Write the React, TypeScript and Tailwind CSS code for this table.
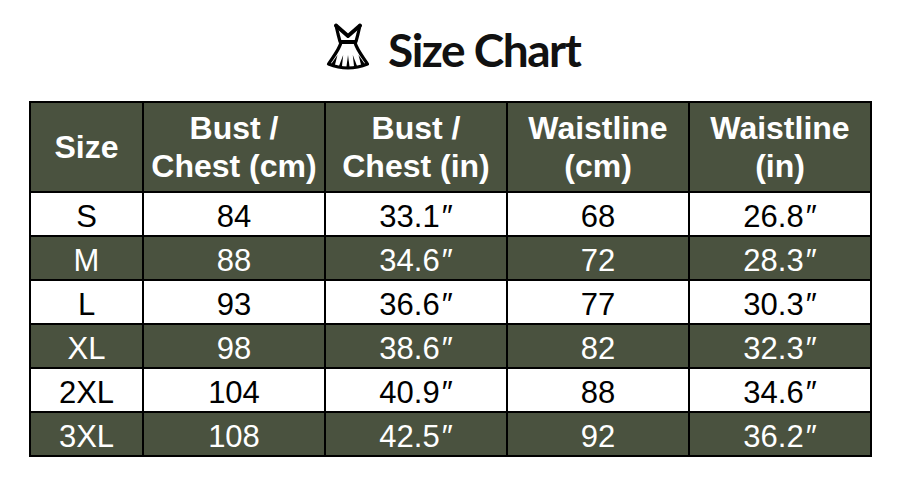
import React from 'react';

const rows = [
  ['S', '84', '33.1″', '68', '26.8″'],
  ['M', '88', '34.6″', '72', '28.3″'],
  ['L', '93', '36.6″', '77', '30.3″'],
  ['XL', '98', '38.6″', '82', '32.3″'],
  ['2XL', '104', '40.9″', '88', '34.6″'],
  ['3XL', '108', '42.5″', '92', '36.2″'],
];

const headers = [
  ['Size'],
  ['Bust /', 'Chest (cm)'],
  ['Bust /', 'Chest (in)'],
  ['Waistline', '(cm)'],
  ['Waistline', '(in)'],
];

function DressIcon() {
  return (
    <svg width="56" height="56" viewBox="0 0 56 56" fill="none">
      {/* bodice */}
      <path
        d="M16 2.5 L18 11 L20 18.5 L36 18.5 L38 11 L40 2.5"
        stroke="black"
        strokeWidth="3.2"
        strokeLinejoin="round"
        strokeLinecap="round"
      />
      {/* neckline */}
      <path d="M16 2.5 L28 13 L40 2.5" stroke="black" strokeWidth="3.8" strokeLinejoin="round" strokeLinecap="round" />
      {/* skirt */}
      <path
        d="M21 19.5 C19 27 13 34 8.5 41 Q28 49 47.5 41 C43 34 37 27 35 19.5 Z"
        fill="white"
        stroke="black"
        strokeWidth="3.2"
        strokeLinejoin="round"
      />
      {/* pleats */}
      <path d="M10.5 42 L14.5 43.5 L17.5 32 Z" fill="black" />
      <path d="M18.5 44.2 L21.8 44.8 L23.2 32 Z" fill="black" />
      <path d="M26.3 45 L29.7 45 L28 32 Z" fill="black" />
      <path d="M34.2 44.8 L37.5 44.2 L32.8 32 Z" fill="black" />
      <path d="M41.5 43.5 L45.5 42 L38.5 32 Z" fill="black" />
    </svg>
  );
}

function Cell({ value }: { value: string }) {
  if (!value.endsWith('″')) return <>{value}</>;
  return (
    <>
      {value.slice(0, -1)}
      <span className="ml-[2px]">″</span>
    </>
  );
}

export default function App() {
  return (
    <div className="w-[901px] h-[482px] bg-white" style={{ fontFamily: '"Liberation Sans", Arial, sans-serif' }}>
      <div className="h-[101px] flex items-center pl-[320px]">
        <DressIcon />
        <h1
          className="ml-[12px] text-[46px] font-bold text-[#111] tracking-[-1.5px] pb-[2px]"
          style={{ fontFamily: 'Lato, "Open Sans", sans-serif' }}
        >
          Size Chart
        </h1>
      </div>
      <table className="ml-[29px] w-[841px] table-fixed border-collapse border-2 border-black">
        <colgroup>
          <col className="w-[113px]" />
          <col className="w-[182px]" />
          <col className="w-[182px]" />
          <col className="w-[182px]" />
          <col className="w-[182px]" />
        </colgroup>
        <thead>
          <tr className="h-[90px] bg-[#4a523f]">
            {headers.map((h, i) => (
              <th
                key={i}
                className="border-2 border-black text-white font-bold text-[32px] leading-[38px] text-center align-middle p-0 whitespace-nowrap"
              >
                {h.map((line, j) => (
                  <div key={j}>{line}</div>
                ))}
              </th>
            ))}
          </tr>
        </thead>
        <tbody>
          {rows.map((r, i) => (
            <tr key={i} className={i % 2 === 0 ? 'h-[44px] bg-white text-black' : 'h-[44px] bg-[#4a523f] text-white'}>
              {r.map((c, j) => (
                <td key={j} className="border-2 border-black text-center text-[31px] leading-[30px] p-0 pt-[5px] whitespace-nowrap">
                  <Cell value={c} />
                </td>
              ))}
            </tr>
          ))}
        </tbody>
      </table>
    </div>
  );
}
